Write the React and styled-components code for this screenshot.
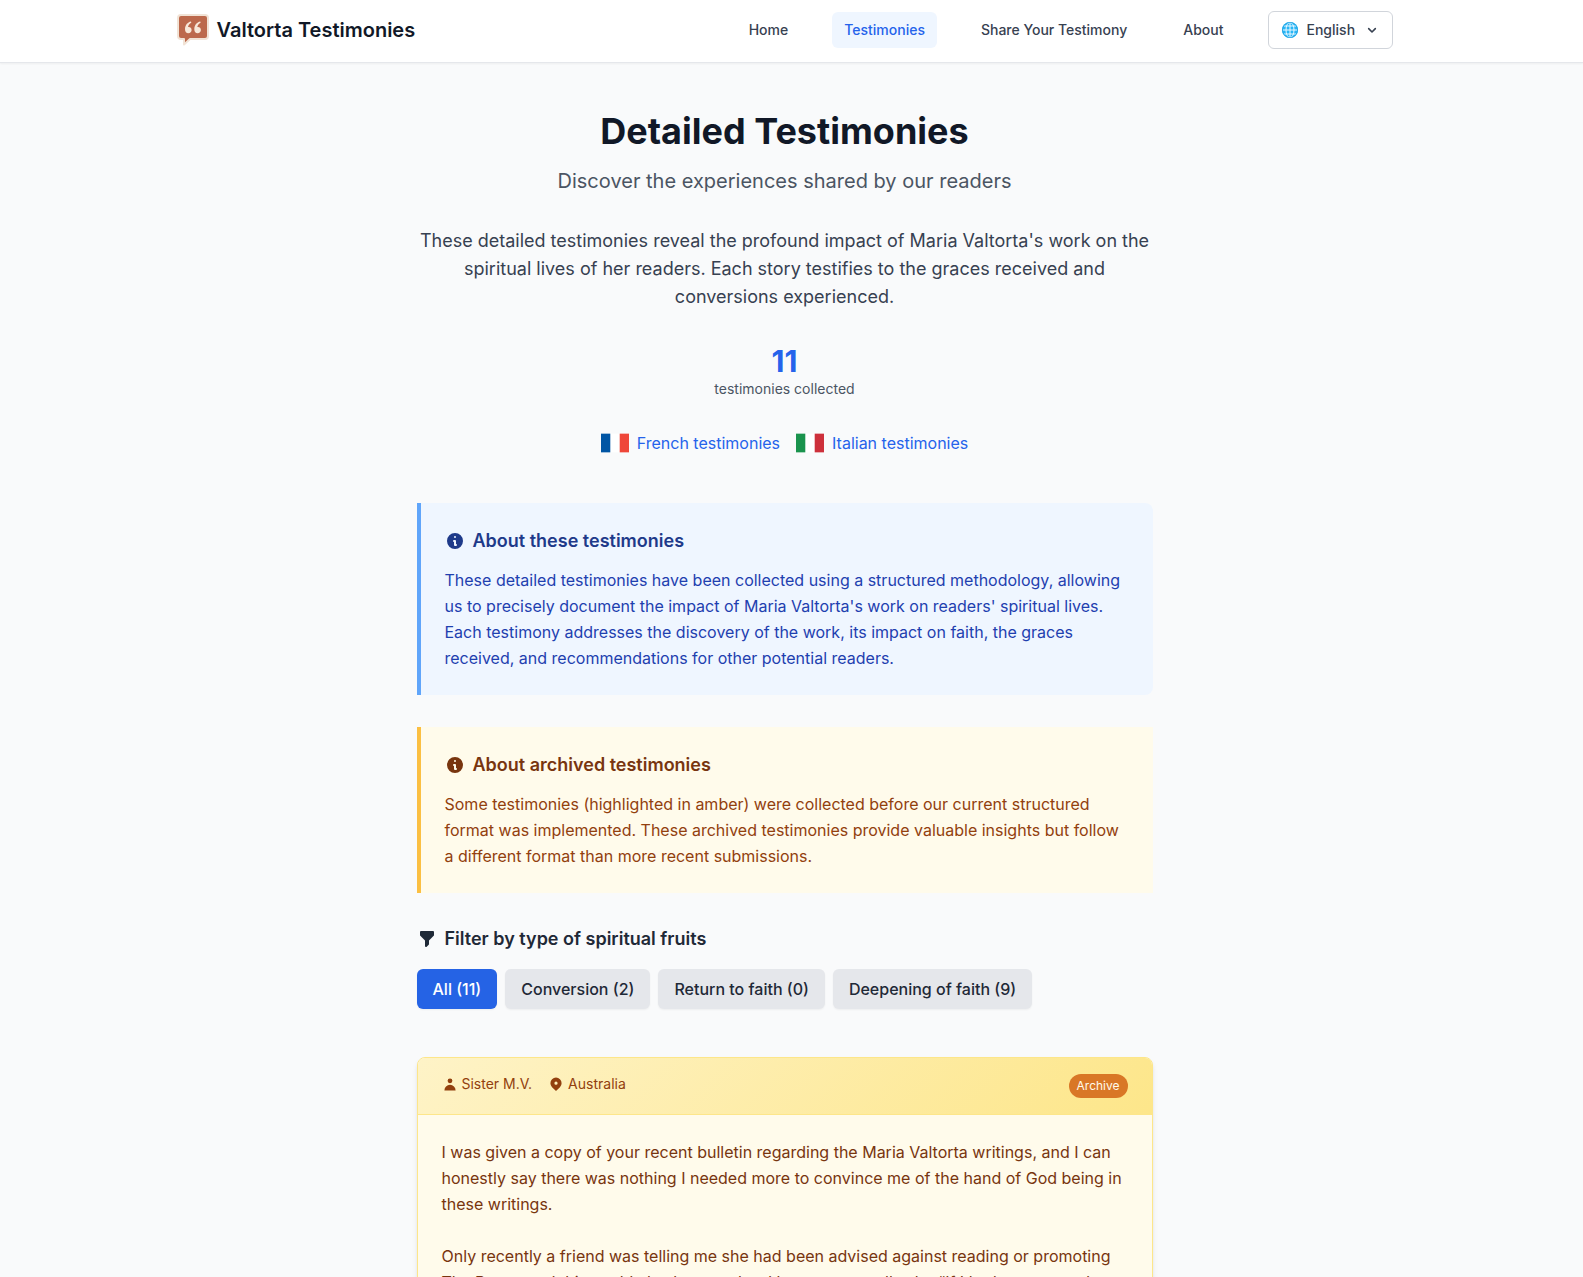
import { useState } from "react";
import styled, { createGlobalStyle } from "styled-components";

const GlobalStyle = createGlobalStyle`
    *, *::before, *::after {
        box-sizing: border-box;
    }
    body {
        margin: 0;
        background-color: #f9fafb;
        color: #111827;
        font-family: Inter, "Liberation Sans", sans-serif;
        font-size: 16px;
        line-height: 24px;
    }
    h1, h2, h3, p {
        margin: 0;
    }
    button, select {
        font-family: inherit;
    }
    svg {
        display: block;
        flex-shrink: 0;
    }
`

const Page = styled.div`
    background-color: #f9fafb;
    height: 100vh;
    overflow-y: auto;
    scrollbar-width: none;
`
const Header = styled.header`
    background-color: #fff;
    border-bottom: 1px solid #e5e7eb;
    box-shadow: 0 1px 2px rgba(0, 0, 0, 0.05);
    padding-right: 14px;
`
const HeaderInner = styled.div`
    display: flex;
    align-items: center;
    justify-content: space-between;
    max-width: 1280px;
    margin: 0 auto;
    padding: 11px 32px 13px;
`
const Brand = styled.a`
    display: flex;
    align-items: center;
    gap: 8px;
    color: #111827;
    font-size: 20px;
    font-weight: 600;
    line-height: 28px;
    text-decoration: none;
`
const Nav = styled.nav`
    display: flex;
    align-items: center;
    gap: 32px;
`
const NavLink = styled.a`
    padding: 8px 12px;
    border-radius: 6px;
    background-color: ${({ $active }) => ($active ? "#eff6ff" : "transparent")};
    color: ${({ $active }) => ($active ? "#2563eb" : "#374151")};
    font-size: 14px;
    font-weight: 500;
    line-height: 20px;
    text-decoration: none;
`
const LanguagePicker = styled.label`
    display: flex;
    align-items: center;
    gap: 8px;
    padding: 8px 12px;
    border: 1px solid #d1d5db;
    border-radius: 6px;
    background-color: #fff;
    color: #374151;
`
const LanguageSelect = styled.select`
    appearance: none;
    width: 49px;
    padding: 0;
    border: none;
    background: transparent;
    color: inherit;
    font-size: 14px;
    font-weight: 500;
    line-height: 20px;
    cursor: pointer;
`

const Main = styled.main`
    padding: 48px 14px 48px 0;
`
const Content = styled.div`
    max-width: 768px;
    margin: 0 auto;
    padding: 0 16px;
`
const Intro = styled.section`
    display: flex;
    flex-direction: column;
    align-items: center;
    text-align: center;
    margin-bottom: 48px;
`
const Title = styled.h1`
    font-size: 36px;
    font-weight: 700;
    line-height: 40px;
    margin-bottom: 16px;
`
const Subtitle = styled.p`
    color: #4b5563;
    font-size: 20px;
    line-height: 28px;
    margin-bottom: 32px;
`
const Lead = styled.p`
    color: #374151;
    font-size: 18px;
    line-height: 28px;
    margin-bottom: 32px;
`
const Count = styled.div`
    color: #2563eb;
    font-size: 30px;
    font-weight: 700;
    line-height: 36px;
`
const CountLabel = styled.div`
    color: #4b5563;
    font-size: 14px;
    line-height: 20px;
    margin-bottom: 32px;
`
const FlagLinks = styled.div`
    display: flex;
    justify-content: center;
    gap: 16px;
`
const FlagLink = styled.a`
    display: flex;
    align-items: center;
    gap: 8px;
    color: #2563eb;
    text-decoration: none;
`

const notices = {
    blue: { bg: "#eff6ff", border: "#60a5fa", head: "#1e3a8a", text: "#1e40af", radius: "0 8px 8px 0" },
    amber: { bg: "#fffbeb", border: "#fbbf42", head: "#78350f", text: "#92400e", radius: "0" },
}
const Notice = styled.section`
    padding: 24px;
    border-left: 4px solid ${({ $tone }) => notices[$tone].border};
    border-radius: ${({ $tone }) => notices[$tone].radius};
    background-color: ${({ $tone }) => notices[$tone].bg};
    color: ${({ $tone }) => notices[$tone].text};
    line-height: 26px;
    margin-bottom: 32px;
`
const NoticeTitle = styled.h2`
    display: flex;
    align-items: center;
    gap: 8px;
    color: ${({ $tone }) => notices[$tone].head};
    font-size: 18px;
    font-weight: 600;
    line-height: 28px;
    margin-bottom: 12px;
`

const FilterTitle = styled.h2`
    display: flex;
    align-items: center;
    gap: 8px;
    color: #1f2937;
    font-size: 18px;
    font-weight: 600;
    line-height: 28px;
    margin-bottom: 16px;
`
const Filters = styled.div`
    display: flex;
    flex-wrap: wrap;
    gap: 8px;
    margin-bottom: 48px;
`
const FilterBtn = styled.button`
    padding: 8px 16px;
    border: none;
    border-radius: 6px;
    background-color: ${({ $active }) => ($active ? "#2563e5" : "#e5e7eb")};
    box-shadow: 0 1px 2px rgba(0, 0, 0, 0.05);
    color: ${({ $active }) => ($active ? "#fff" : "#1f2937")};
    font-size: 16px;
    font-weight: 500;
    line-height: 24px;
    cursor: pointer;
`

const Card = styled.article`
    border: 1px solid #fde68a;
    border-radius: 8px;
    background-color: #fffbeb;
    box-shadow: 0 4px 6px -1px rgba(0, 0, 0, 0.1), 0 2px 4px -2px rgba(0, 0, 0, 0.1);
    overflow: hidden;
`
const CardHeader = styled.header`
    display: flex;
    align-items: flex-start;
    justify-content: space-between;
    padding: 16px 24px;
    border-bottom: 1px solid #fde68a;
    background-image: linear-gradient(135deg, #fef3c7, #fde68a);
`
const CardMeta = styled.div`
    display: flex;
    gap: 16px;
    color: #92400e;
    font-size: 14px;
    line-height: 20px;
`
const MetaItem = styled.span`
    display: flex;
    align-items: center;
    gap: 4px;
`
const Badge = styled.span`
    padding: 4px 8px;
    border-radius: 12px;
    background-color: #d97726;
    color: #fffbeb;
    font-size: 12px;
    line-height: 16px;
`
const CardBody = styled.div`
    display: flex;
    flex-direction: column;
    gap: 26px;
    padding: 24px;
    color: #78350f;
    line-height: 26px;
`

const LogoIcon = () => (
    <svg width="32" height="32" viewBox="0 0 32 32" aria-hidden="true">
        <path d="M4 1H28Q31 1 31 4V22Q31 25 28 25H13L7 30.500V25H4Q1 25 1 22V4Q1 1 4 1Z" fill="#bc694c" stroke="#f1e3d6" strokeWidth="2" strokeLinejoin="round" />
        <path d="M14 7.4C10.500 8 8 11 8 15.200C8 17.800 9.400 19.200 11.300 19.200C13.200 19.200 14.600 17.900 14.600 16C14.600 14.200 13.400 13 11.700 13C11.500 13 11.200 13 11 13.100C11.300 11.200 12.500 9.700 14.300 8.800Z" fill="#f7e8d9" />
        <path d="M23.300 7.400C19.800 8 17.300 11 17.300 15.200C17.300 17.800 18.700 19.200 20.600 19.200C22.500 19.200 23.900 17.900 23.900 16C23.900 14.200 22.700 13 21 13C20.800 13 20.500 13 20.300 13.100C20.600 11.200 21.800 9.700 23.600 8.800Z" fill="#f7e8d9" />
    </svg>
)

const GlobeIcon = () => (
    <svg width="18" height="18" viewBox="0 0 18 18" aria-hidden="true">
        <circle cx="9" cy="9" r="8" fill="#29b6f6" />
        <g fill="none" stroke="#e8f7ff" strokeWidth="1">
            <ellipse cx="9" cy="9" rx="4" ry="7.500" />
            <path d="M9 1.500V16.500M1.500 9H16.500M3 5H15M3 13H15" />
        </g>
        <circle cx="9" cy="9" r="7.600" fill="none" stroke="#1e9fe0" strokeWidth="0.800" />
    </svg>
)

const ChevronIcon = () => (
    <svg width="16" height="16" viewBox="0 0 24 24" fill="none" stroke="currentColor" strokeWidth="2.400" strokeLinecap="round" strokeLinejoin="round" aria-hidden="true">
        <path d="M17 10l-5 5-5-5" />
    </svg>
)

const Flag = ({ left, right }) => (
    <svg width="28" height="20" viewBox="0 0 28 20" aria-hidden="true">
        <rect width="28" height="20" fill="#fff" />
        <rect width="9.300" height="20" fill={left} />
        <rect x="18.700" width="9.300" height="20" fill={right} />
        <path d="M0 .5H28M0 19.500H28" stroke="#f9fafb" strokeOpacity="0.650" />
    </svg>
)

const icons = {
    info: "M18 10a8 8 0 11-16 0 8 8 0 0116 0zm-7-4a1 1 0 11-2 0 1 1 0 012 0zM9 9a1 1 0 000 2v3a1 1 0 001 1h1a1 1 0 100-2v-3a1 1 0 00-1-1H9z",
    filter: "M3 3a1 1 0 011-1h12a1 1 0 011 1v3a1 1 0 01-.293.707L12 11.414V15a1 1 0 01-.293.707l-2 2A1 1 0 018 17v-5.586L3.293 6.707A1 1 0 013 6V3z",
    user: "M10 9a3 3 0 100-6 3 3 0 000 6zm-7 9a7 7 0 1114 0H3z",
    location: "M5.050 4.050a7 7 0 119.900 9.900L10 18.900l-4.950-4.950a7 7 0 010-9.900zM10 11a2 2 0 100-4 2 2 0 000 4z",
}
const Icon = ({ name, size = 20 }) => (
    <svg width={size} height={size} viewBox="0 0 20 20" fill="currentColor" aria-hidden="true">
        <path fillRule="evenodd" clipRule="evenodd" d={icons[name]} />
    </svg>
)

const links = [
    { text: "Home", href: "#home" },
    { text: "Testimonies", href: "#testimonies", active: true },
    { text: "Share Your Testimony", href: "#share" },
    { text: "About", href: "#about" },
]

const filters = [
    { id: "all", text: "All", count: 11 },
    { id: "conversion", text: "Conversion", count: 2 },
    { id: "return", text: "Return to faith", count: 0 },
    { id: "deepening", text: "Deepening of faith", count: 9 },
]

const App = () => {
    const [filter, setFilter] = useState("all");

    return (
        <>
        <GlobalStyle />
        <Page>
            <Header>
                <HeaderInner>
                    <Brand href="#home">
                        <LogoIcon />
                        Valtorta Testimonies
                    </Brand>
                    <Nav>
                        {links.map(({ text, href, active }) => (
                            <NavLink key={href} href={href} $active={active}>{text}</NavLink>
                        ))}
                        <LanguagePicker>
                            <GlobeIcon />
                            <LanguageSelect aria-label="Language" defaultValue="en">
                                <option value="en">English</option>
                                <option value="fr">Français</option>
                                <option value="it">Italiano</option>
                            </LanguageSelect>
                            <ChevronIcon />
                        </LanguagePicker>
                    </Nav>
                </HeaderInner>
            </Header>
            <Main>
                <Content>
                    <Intro>
                        <Title>Detailed Testimonies</Title>
                        <Subtitle>Discover the experiences shared by our readers</Subtitle>
                        <Lead>These detailed testimonies reveal the profound impact of Maria Valtorta's work on the spiritual lives of her readers. Each story testifies to the graces received and conversions experienced.</Lead>
                        <Count>11</Count>
                        <CountLabel>testimonies collected</CountLabel>
                        <FlagLinks>
                            <FlagLink href="#french"><Flag left="#0055a4" right="#ef4639" />French testimonies</FlagLink>
                            <FlagLink href="#italian"><Flag left="#1a934d" right="#cd303b" />Italian testimonies</FlagLink>
                        </FlagLinks>
                    </Intro>

                    <Notice $tone="blue">
                        <NoticeTitle $tone="blue"><Icon name="info" />About these testimonies</NoticeTitle>
                        <p>These detailed testimonies have been collected using a structured methodology, allowing us to precisely document the impact of Maria Valtorta's work on readers' spiritual lives. Each testimony addresses the discovery of the work, its impact on faith, the graces received, and recommendations for other potential readers.</p>
                    </Notice>
                    <Notice $tone="amber">
                        <NoticeTitle $tone="amber"><Icon name="info" />About archived testimonies</NoticeTitle>
                        <p>Some testimonies (highlighted in amber) were collected before our current structured format was implemented. These archived testimonies provide valuable insights but follow a different format than more recent submissions.</p>
                    </Notice>

                    <FilterTitle><Icon name="filter" />Filter by type of spiritual fruits</FilterTitle>
                    <Filters>
                        {filters.map(({ id, text, count }) => (
                            <FilterBtn key={id} type="button" $active={filter === id} onClick={() => setFilter(id)}>
                                {text} ({count})
                            </FilterBtn>
                        ))}
                    </Filters>

                    <Card>
                        <CardHeader>
                            <CardMeta>
                                <MetaItem><Icon name="user" size={16} />Sister M.V.</MetaItem>
                                <MetaItem><Icon name="location" size={16} />Australia</MetaItem>
                            </CardMeta>
                            <Badge>Archive</Badge>
                        </CardHeader>
                        <CardBody>
                            <p>I was given a copy of your recent bulletin regarding the Maria Valtorta writings, and I can honestly say there was nothing I needed more to convince me of the hand of God being in these writings.</p>
                            <p>Only recently a friend was telling me she had been advised against reading or promoting The Poem, and this could also be seen hard but more usually she “If I had to see word</p>
                        </CardBody>
                    </Card>
                </Content>
            </Main>
        </Page>
        </>
    )
}

export default App
